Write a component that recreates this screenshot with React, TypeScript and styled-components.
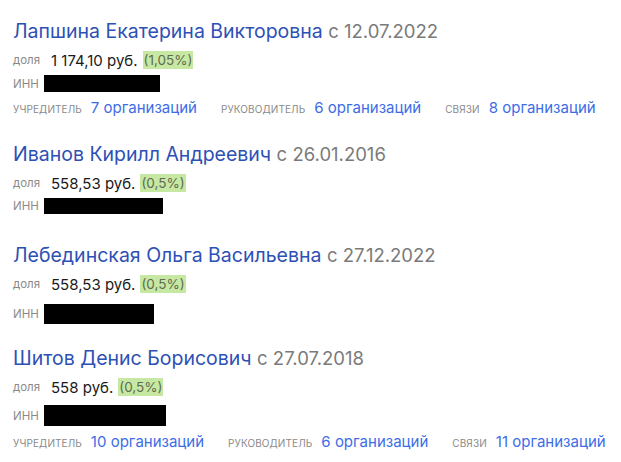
import React from "react";
import styled, { createGlobalStyle } from "styled-components";

interface Links {
  founder: number;
  head: number;
  ties: number;
}

interface Person {
  name: string;
  since: string;
  share: string;
  percent: string;
  innWidth: number;
  innHeight: number;
  innTop: number;
  gapAfter: number;
  links?: Links;
}

const people: Person[] = [
  {
    name: "Лапшина Екатерина Викторовна",
    since: "12.07.2022",
    share: "1 174,10 руб.",
    percent: "(1,05%)",
    innWidth: 116,
    innHeight: 17,
    innTop: 3,
    gapAfter: 21,
    links: { founder: 7, head: 6, ties: 8 },
  },
  {
    name: "Иванов Кирилл Андреевич",
    since: "26.01.2016",
    share: "558,53 руб.",
    percent: "(0,5%)",
    innWidth: 119,
    innHeight: 16,
    innTop: 3,
    gapAfter: 22,
  },
  {
    name: "Лебединская Ольга Васильевна",
    since: "27.12.2022",
    share: "558,53 руб.",
    percent: "(0,5%)",
    innWidth: 110,
    innHeight: 20,
    innTop: 8,
    gapAfter: 15,
  },
  {
    name: "Шитов Денис Борисович",
    since: "27.07.2018",
    share: "558 руб.",
    percent: "(0,5%)",
    innWidth: 122,
    innHeight: 21,
    innTop: 6,
    gapAfter: 0,
    links: { founder: 10, head: 6, ties: 11 },
  },
];

const App: React.FC = () => {
  return (
    <>
      <GlobalStyle />
      <List>
        {people.map((p) => (
          <Item key={p.name} $gap={p.gapAfter}>
            <NameRow>
              <Name>{p.name}</Name> <Since>с {p.since}</Since>
            </NameRow>
            <ShareRow>
              <SmallLabel>доля</SmallLabel>
              <Value>{p.share}</Value>
              <Percent>{p.percent}</Percent>
            </ShareRow>
            <InnRow $top={p.innTop}>
              <SmallLabel>ИНН</SmallLabel>
              <Redacted $w={p.innWidth} $h={p.innHeight} />
            </InnRow>
            {p.links && (
              <LinksRow>
                <LinkGroup>
                  <CapsLabel>учредитель</CapsLabel>
                  <OrgLink>{p.links.founder} организаций</OrgLink>
                </LinkGroup>
                <LinkGroup>
                  <CapsLabel>руководитель</CapsLabel>
                  <OrgLink>{p.links.head} организаций</OrgLink>
                </LinkGroup>
                <LinkGroup>
                  <CapsLabel>связи</CapsLabel>
                  <OrgLink>{p.links.ties} организаций</OrgLink>
                </LinkGroup>
              </LinksRow>
            )}
          </Item>
        ))}
      </List>
    </>
  );
};

const GlobalStyle = createGlobalStyle`
  body {
    margin: 0;
    background: #ffffff;
    font-family: Inter, "Noto Sans", sans-serif;
  }
`;

const List = styled.div`
  display: flex;
  flex-direction: column;
  padding: 16px 0 0 13px;
`;

const Item = styled.div<{ $gap: number }>`
  display: flex;
  flex-direction: column;
  margin-bottom: ${(p) => p.$gap}px;
`;

const NameRow = styled.div`
  height: 30px;
  line-height: 30px;
  font-size: 19.5px;
  margin-bottom: 2px;
  white-space: nowrap;
`;

const Name = styled.a`
  color: #2d50b5;
  text-decoration: none;
`;

const Since = styled.span`
  color: #7a7a7a;
  font-size: 18.5px;
`;

const ShareRow = styled.div`
  display: flex;
  align-items: center;
  height: 24px;
`;

const SmallLabel = styled.span`
  font-size: 11.5px;
  color: #8a8a8a;
  width: 31px;
  flex-shrink: 0;
`;

const Value = styled.span`
  font-size: 15px;
  color: #1a1a1a;
  margin-left: 7px;
  margin-right: 5px;
`;

const Percent = styled.span`
  font-size: 13.5px;
  color: #5f6b52;
  background: #c7e8a3;
  padding: 0 1px;
  line-height: 18px;
`;

const InnRow = styled.div<{ $top: number }>`
  display: flex;
  align-items: center;
  padding-top: ${(p) => p.$top}px;
  padding-bottom: 4px;
`;

const Redacted = styled.div<{ $w: number; $h: number }>`
  width: ${(p) => p.$w}px;
  height: ${(p) => p.$h}px;
  background: #000;
`;

const LinksRow = styled.div`
  display: flex;
  align-items: center;
  height: 22px;
  gap: 24px;
`;

const LinkGroup = styled.div`
  display: flex;
  align-items: baseline;
  gap: 9px;
`;

const CapsLabel = styled.span`
  font-size: 10px;
  letter-spacing: 0.1px;
  text-transform: uppercase;
  color: #8a8a8a;
`;

const OrgLink = styled.a`
  font-size: 15px;
  color: #3d6de6;
  text-decoration: none;
`;

export default App;
